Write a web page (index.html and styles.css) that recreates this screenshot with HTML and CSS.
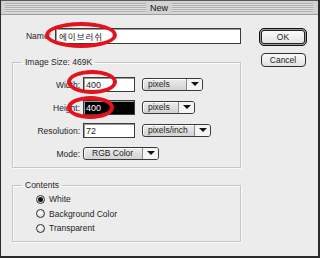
FILE: index.html
```html
<!DOCTYPE html>
<html lang="en">
<head>
  <meta charset="UTF-8">
  <title>New</title>
  <link rel="stylesheet" href="styles.css">
</head>
<body>
  <div class="window">
    <div class="titlebar">
      <span class="stripes"></span>
      <span class="title">New</span>
      <span class="stripes"></span>
    </div>

    <div class="dialog">
      <div class="main">
        <div class="name-row">
          <label>Name:</label>
          <div class="field name-field">에이브러쉬</div>
        </div>

        <fieldset class="group size-group">
          <legend>Image Size: 469K</legend>
          <div class="rows">
            <label>Width:</label>
            <div class="field">400</div>
            <div class="popup w-61"><span>pixels</span><i></i></div>

            <label>Height:</label>
            <div class="field selected">400</div>
            <div class="popup w-53"><span>pixels</span><i></i></div>

            <label>Resolution:</label>
            <div class="field">72</div>
            <div class="popup w-69"><span>pixels/inch</span><i></i></div>

            <label>Mode:</label>
            <div class="popup mode"><span>RGB Color</span><i></i></div>
          </div>
        </fieldset>

        <fieldset class="group contents-group">
          <legend>Contents</legend>
          <div class="radios">
            <div class="radio on"><b></b>White</div>
            <div class="radio"><b></b>Background Color</div>
            <div class="radio"><b></b>Transparent</div>
          </div>
        </fieldset>
      </div>

      <div class="buttons">
        <div class="btn default"><span>OK</span></div>
        <div class="btn cancel">Cancel</div>
      </div>
    </div>

    <!-- red marks drawn over the screenshot -->
    <div class="mark mark-name"></div>
    <div class="mark mark-width"></div>
    <div class="mark mark-height"></div>
  </div>
</body>
</html>
```

FILE: styles.css
```css
* { box-sizing: border-box; }
body { margin: 0; background: #fff; font-family: "Liberation Sans", Arial, sans-serif; font-size: 8.5px; color: #1e1e1e; }

.window { position: relative; width: 320px; height: 258px; background: #ececec; border-left: 1px solid #2b2b2b; border-right: 2px solid #2b2b2b; border-bottom: 2px solid #2b2b2b; overflow: hidden; }

.titlebar { display: flex; align-items: center; height: 15px; padding: 0 5px 0 4px; background: #d2d2d2; border-top: 1px solid #5a5a5a; border-bottom: 1px solid #a0a0a0; }
.stripes { flex: 1; height: 10px; background: repeating-linear-gradient(to bottom, #adadad 0 1px, #e0e0e0 1px 2px); }
.title { padding: 0 4px; font-size: 9px; color: #111; line-height: 12px; }

.dialog { display: flex; padding-top: 13px; }
.main { width: 240px; padding-left: 11px; }

.name-row { display: flex; align-items: center; gap: 4px; padding-left: 12px; }
.name-row label { width: 27px; text-align: right; }

.field { height: 16px; padding: 0 2px; background: #fff; border: 1px solid #3a3a3a; box-shadow: inset 1px 1px 0 #9a9a9a; line-height: 14px; font-size: 9px; }
.name-field { flex: 1; padding-left: 3px; font-family: "Noto Sans CJK KR", sans-serif; font-size: 8.5px; letter-spacing: 1px; }
.field.selected { background: #000; color: #fff; }

.group { margin: 13px 0 0; padding: 0; border: 1px solid #c6c6c6; box-shadow: 1px 1px 0 #fafafa, inset 1px 1px 0 #fafafa; }
.group legend { margin-left: 9px; padding: 0 3px; line-height: 10px; }

.rows { display: grid; grid-template-columns: 67px 52px auto; grid-auto-rows: 15px; column-gap: 3px; row-gap: 8px; align-items: center; padding: 10px 0 6px; }
.rows label { text-align: right; }
.rows .field { height: 15px; }
.rows .popup { margin-left: 4px; }

.popup { display: flex; align-items: center; height: 13px; background: linear-gradient(#ececec, #d2d2d2); border: 1px solid #3a3a3a; border-radius: 3px; box-shadow: inset 1px 1px 0 #fff; }
.popup span { flex: 1; padding-left: 5px; line-height: 11px; }
.popup i { width: 16px; height: 11px; border-left: 1px solid #8a8a8a; background: #f4f4f4; border-radius: 0 2px 2px 0; position: relative; }
.popup i::after { content: ""; position: absolute; left: 4px; top: 3px; border-left: 4px solid transparent; border-right: 4px solid transparent; border-top: 4px solid #111; }
.w-61 { width: 61px; }
.w-53 { width: 53px; }
.w-69 { width: 69px; }
.rows .mode { grid-column: 2 / 4; width: 76px; margin-left: 0; height: 13px; }
.mode span { padding-left: 8px; }

.contents-group { margin-top: 12px; }
.radios { padding: 2px 0 5px 23px; }
.radio { display: flex; align-items: center; gap: 4px; height: 14.5px; }
.radio b { width: 9px; height: 9px; border: 1px solid #2e2e2e; border-radius: 50%; background: radial-gradient(circle at 35% 35%, #fff, #cfcfcf); position: relative; }
.radio.on b::after { content: ""; position: absolute; left: 1px; top: 1px; width: 5px; height: 5px; border-radius: 50%; background: #111; }

.buttons { display: flex; flex-direction: column; align-items: center; gap: 7px; width: 50px; margin-left: 17px; }
.btn { display: flex; align-items: center; justify-content: center; background: linear-gradient(#fafafa, #e2e2e2); border: 1px solid #2e2e2e; border-radius: 4px; }
.btn.default { width: 48px; height: 18px; padding: 1px; background: #9a9a9a; border-color: #111; border-radius: 5px; }
.btn.default span { display: flex; align-items: center; justify-content: center; width: 100%; height: 100%; background: linear-gradient(#fafafa, #e4e4e4); border: 1px solid #222; border-radius: 3px; }
.btn.cancel { width: 45px; height: 14px; }

.mark { position: absolute; border: 4px solid #e3121c; border-radius: 50%; }
.mark-name { left: 44px; top: 22px; width: 72px; height: 26px; }
.mark-width { left: 66px; top: 70px; width: 50px; height: 24px; }
.mark-height { left: 66px; top: 96px; width: 47px; height: 23px; }
```
